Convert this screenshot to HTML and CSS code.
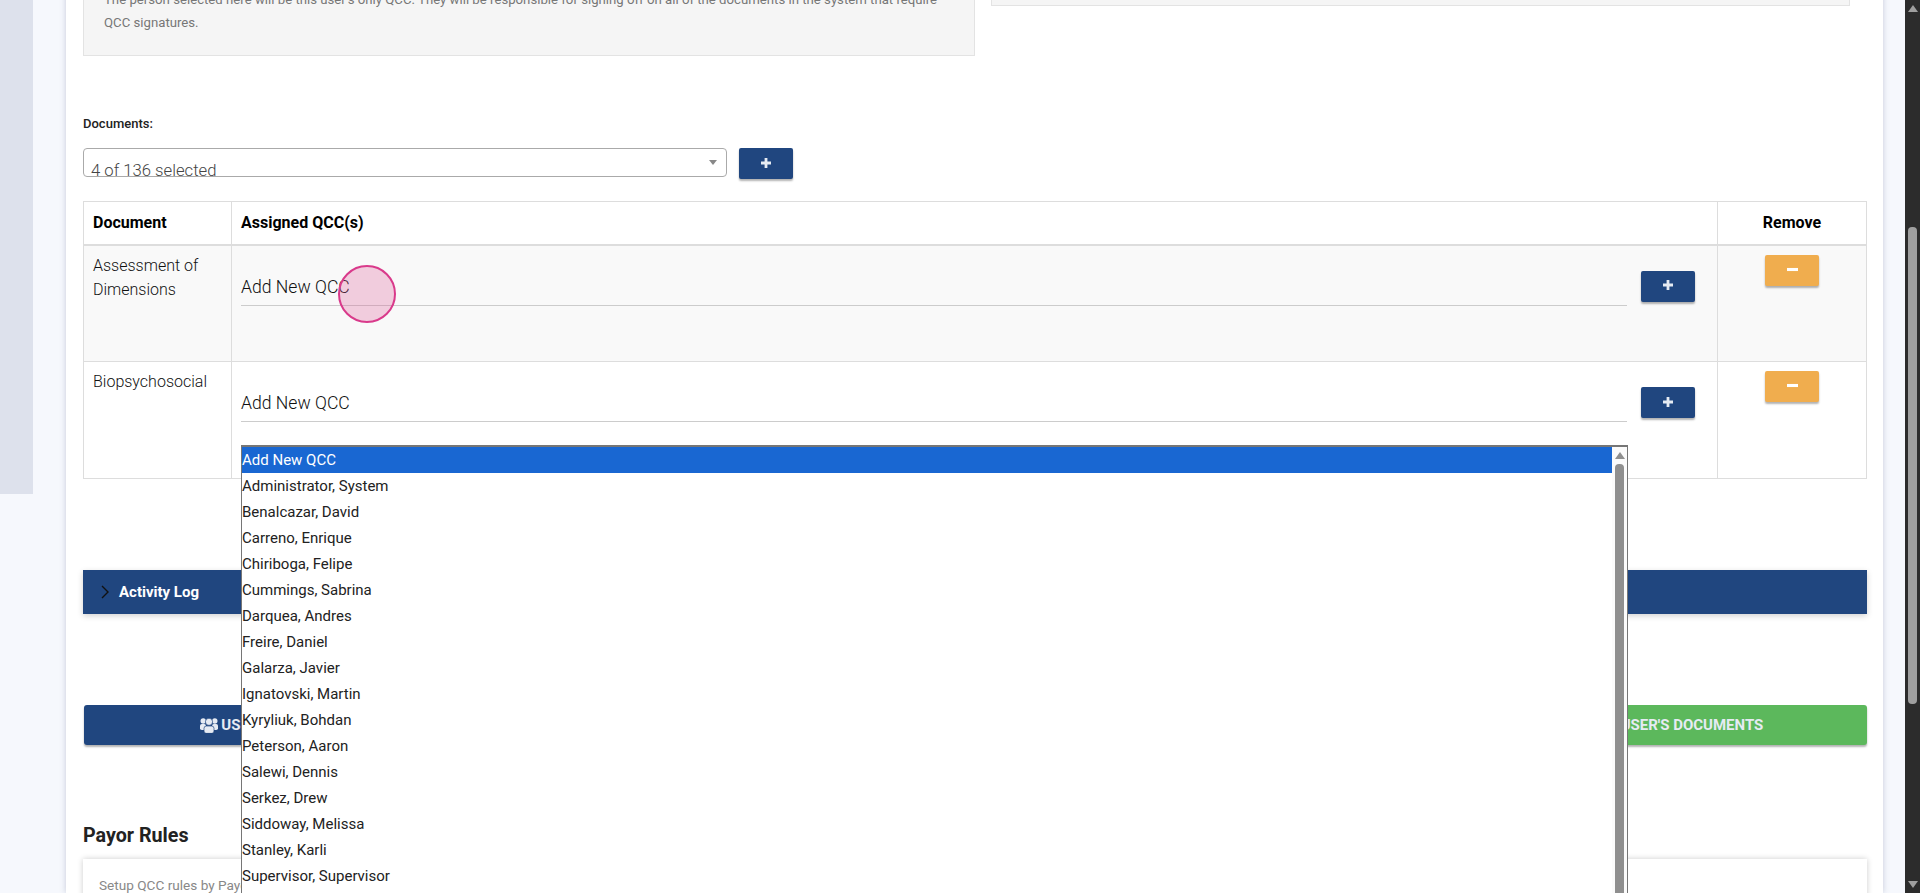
FILE: index.html
```html
<!DOCTYPE html>
<html lang="en">
<head>
  <meta charset="UTF-8">
  <meta name="viewport" content="width=device-width, initial-scale=1.0">
  <title>User QCC Settings</title>
  <link rel="stylesheet" href="styles.css">
</head>
<body>
  <div class="shell">
    <div class="sidebar"></div>

    <main class="card">
      <div class="info-row">
        <div class="info-box">The person selected here will be this user's only QCC. They will be responsible for signing off on all of the documents in the system that require QCC signatures.</div>
        <div class="info-box-short"></div>
      </div>

      <div class="field-label">Documents:</div>
      <div class="documents-row">
        <div class="multi-select">
          <span class="multi-select-text">4 of 136 selected</span>
          <span class="multi-select-arrow"></span>
        </div>
        <button class="btn btn-blue btn-icon" type="button">
          <svg class="icon-sign" viewBox="0 0 10 10"><path d="M3.6 0h2.8v3.6H10v2.8H6.4V10H3.6V6.4H0V3.6h3.6z"/></svg>
        </button>
      </div>

      <table class="qcc-table">
        <thead>
          <tr>
            <th class="col-doc">Document</th>
            <th>Assigned QCC(s)</th>
            <th class="col-remove">Remove</th>
          </tr>
        </thead>
        <tbody>
          <tr class="row-odd">
            <td class="doc-name">Assessment of Dimensions</td>
            <td>
              <div class="qcc-row">
                <div class="qcc-field">Add New QCC</div>
                <button class="btn btn-blue btn-icon" type="button">
                  <svg class="icon-sign" viewBox="0 0 10 10"><path d="M3.6 0h2.8v3.6H10v2.8H6.4V10H3.6V6.4H0V3.6h3.6z"/></svg>
                </button>
              </div>
            </td>
            <td class="col-remove">
              <button class="btn btn-orange btn-icon" type="button">
                <svg class="icon-sign" viewBox="0 0 10 10"><path d="M0 3.600h10v2.800H0z"/></svg>
              </button>
            </td>
          </tr>
          <tr>
            <td class="doc-name">Biopsychosocial</td>
            <td>
              <div class="qcc-row">
                <div class="qcc-field qcc-field-open">
                  Add New QCC
                  <div class="option-list">
                    <ul class="options">
                      <li class="selected">Add New QCC</li>
                      <li>Administrator, System</li>
                      <li>Benalcazar, David</li>
                      <li>Carreno, Enrique</li>
                      <li>Chiriboga, Felipe</li>
                      <li>Cummings, Sabrina</li>
                      <li>Darquea, Andres</li>
                      <li>Freire, Daniel</li>
                      <li>Galarza, Javier</li>
                      <li>Ignatovski, Martin</li>
                      <li>Kyryliuk, Bohdan</li>
                      <li>Peterson, Aaron</li>
                      <li>Salewi, Dennis</li>
                      <li>Serkez, Drew</li>
                      <li>Siddoway, Melissa</li>
                      <li>Stanley, Karli</li>
                      <li>Supervisor, Supervisor</li>
                    </ul>
                    <div class="list-scroll">
                      <span class="arrow-up"></span>
                      <span class="list-thumb"></span>
                    </div>
                  </div>
                </div>
                <button class="btn btn-blue btn-icon" type="button">
                  <svg class="icon-sign" viewBox="0 0 10 10"><path d="M3.6 0h2.8v3.6H10v2.8H6.4V10H3.6V6.4H0V3.6h3.6z"/></svg>
                </button>
              </div>
            </td>
            <td class="col-remove">
              <button class="btn btn-orange btn-icon" type="button">
                <svg class="icon-sign" viewBox="0 0 10 10"><path d="M0 3.600h10v2.800H0z"/></svg>
              </button>
            </td>
          </tr>
        </tbody>
      </table>

      <div class="activity-bar">
        <svg class="chevron" viewBox="0 0 8 14"><path d="M1 1l6 6-6 6" fill="none" stroke="#111" stroke-width="1.4"/></svg>
        <span>Activity Log</span>
      </div>

      <div class="action-row">
        <button class="btn btn-blue action-btn" type="button">
          <svg class="icon-users" viewBox="0 0 18 15">
            <circle cx="3.200" cy="3" r="2.700"/>
            <circle cx="14.800" cy="3" r="2.700"/>
            <rect x="0" y="6" width="6" height="6" rx="1.800"/>
            <rect x="12" y="6" width="6" height="6" rx="1.800"/>
            <circle class="users-front" cx="9" cy="3.800" r="3.600"/>
            <rect class="users-front" x="4" y="8" width="10" height="7.400" rx="2.400"/>
          </svg>
          USERS
        </button>
        <div></div>
        <button class="btn btn-green action-btn" type="button">USER'S DOCUMENTS</button>
      </div>

      <h2 class="section-title">Payor Rules</h2>
      <div class="payor-card">Setup QCC rules by Payor</div>
    </main>

    <div class="page-scroll">
      <span class="arrow-up"></span>
      <span class="page-thumb"></span>
      <span class="arrow-down"></span>
    </div>

    <!-- recorded click marker -->
    <div class="click-marker"></div>
  </div>
</body>
</html>
```

FILE: styles.css
```css
* {
  box-sizing: border-box;
}

html,
body {
  margin: 0;
  height: 893px;
  overflow: hidden;
}

body {
  font-family: Roboto, "Liberation Sans", sans-serif;
  background-color: #f6f8fd;
  color: #222;
}

.shell {
  position: relative;
  display: flex;
  align-items: flex-start;
  height: 893px;
  overflow: hidden;
}

.sidebar {
  width: 33px;
  height: 494px;
  margin-right: 33px;
  flex-shrink: 0;
  background-color: #dde1ec;
}

.card {
  width: 1817px;
  height: 921px;
  margin-top: -28px;
  padding: 0 16px 0 17px;
  flex-shrink: 0;
  background-color: #fff;
  box-shadow: 0 0 6px rgba(60, 70, 110, 0.25);
}

.info-row {
  display: grid;
  grid-template-columns: 892px 859px;
  gap: 16px;
  align-items: start;
}

.info-box {
  height: 84px;
  padding: 16px 20px 0;
  border: 1px solid #e3e3e3;
  border-top: none;
  background-color: #f5f5f5;
  color: #777;
  font-size: 13.2px;
  line-height: 23px;
}

.info-box-short {
  height: 34px;
  border: 1px solid #e3e3e3;
  border-top: none;
  background-color: #f5f5f5;
}

.field-label {
  margin-top: 60px;
  font-size: 13px;
  font-weight: 500;
  line-height: 16px;
  color: #222;
}

.documents-row {
  display: flex;
  align-items: flex-start;
  gap: 12px;
  margin-top: 16px;
}

.multi-select {
  position: relative;
  width: 644px;
  height: 29px;
  border: 1px solid #aaa;
  border-radius: 4px;
  overflow: hidden;
}

.multi-select-text {
  position: absolute;
  left: 7px;
  top: 12px;
  font-size: 16.7px;
  font-weight: 300;
  line-height: 20px;
  color: #444;
}

.multi-select-arrow {
  position: absolute;
  right: 9px;
  top: 11px;
  border-left: 4px solid transparent;
  border-right: 4px solid transparent;
  border-top: 5px solid #888;
}

.btn {
  display: inline-flex;
  align-items: center;
  justify-content: center;
  border: none;
  border-radius: 2px;
  box-shadow: 0 2px 2px rgba(0, 0, 0, 0.3);
  color: #e6ebf3;
  font-family: inherit;
}

.btn-blue {
  background-color: #20467f;
}

.btn-orange {
  background-color: #f0ad4e;
}

.btn-green {
  background-color: #5cb85c;
}

.btn-icon {
  width: 54px;
  height: 31px;
  padding: 0 0 2px;
  flex-shrink: 0;
}

.icon-sign {
  width: 10px;
  height: 10px;
  fill: currentColor;
}

.btn-orange .icon-sign {
  fill: #fff;
  width: 11px;
  height: 11px;
}

.qcc-table {
  width: 1784px;
  margin-top: 22px;
  border-collapse: collapse;
  table-layout: fixed;
  font-size: 16px;
  font-weight: 300;
  line-height: 24px;
  color: #111;
}

.qcc-table th,
.qcc-table td {
  padding: 10px 10px 10px 9px;
  border: 1px solid #ddd;
  vertical-align: top;
  text-align: left;
}

.qcc-table th {
  height: 43px;
  padding-top: 9px;
  padding-bottom: 8px;
  border-bottom-width: 2px;
  font-weight: 700;
  color: #000;
}

.qcc-table td {
  height: 117px;
}

.qcc-table td.doc-name {
  padding-top: 8px;
}

.qcc-table th.col-doc {
  width: 148px;
}

.qcc-table th.col-remove {
  width: 149px;
}

.qcc-table .col-remove {
  padding-left: 10px;
  text-align: center;
}

.qcc-table td.col-remove {
  padding-top: 9px;
}

.row-odd {
  background-color: #f9f9f9;
}

.qcc-row {
  display: flex;
  align-items: flex-start;
  gap: 14px;
  padding: 15px 12px 0 0;
}

.qcc-field {
  position: relative;
  flex: 1;
  height: 35px;
  border-bottom: 1px solid #ccc;
  font-size: 17.6px;
  line-height: 32px;
  color: #111;
}

.option-list {
  position: absolute;
  top: 58px;
  left: 0;
  z-index: 5;
  display: flex;
  width: 1387px;
  height: 480px;
  border: 1px solid #767676;
  border-top-width: 2px;
  border-bottom: none;
  background-color: #fff;
}

.options {
  flex: 1;
  margin: 0;
  padding: 0;
  list-style: none;
  font-size: 15px;
  font-weight: 400;
  line-height: 26px;
  color: #222;
}

.options li {
  height: 26px;
}

.options .selected {
  background-color: #1967d2;
  color: #fff;
}

.list-scroll {
  display: flex;
  flex-direction: column;
  align-items: center;
  width: 15px;
  padding-top: 5px;
  background-color: #fbfbfb;
}

.arrow-up {
  width: 0;
  border-left: 5px solid transparent;
  border-right: 5px solid transparent;
  border-bottom: 7px solid #8f8f8f;
}

.arrow-down {
  width: 0;
  border-left: 5px solid transparent;
  border-right: 5px solid transparent;
  border-top: 7px solid #9f9f9f;
}

.list-thumb {
  flex: 1;
  width: 9px;
  margin-top: 5px;
  border-radius: 4px 4px 0 0;
  background-color: #8f8f8f;
}

.activity-bar {
  display: flex;
  align-items: center;
  height: 44px;
  margin-top: 91px;
  padding-left: 18px;
  background-color: #20467f;
  box-shadow: 0 2px 6px rgba(0, 0, 0, 0.18);
  color: #fff;
  font-size: 15px;
  font-weight: 700;
}

.chevron {
  width: 8px;
  height: 14px;
  margin-right: 10px;
}

.action-row {
  display: grid;
  grid-template-columns: 300px 1fr 350px;
  margin: 91px 0 0 1px;
  width: 1783px;
}

.action-btn {
  height: 40px;
  padding: 0;
  border-radius: 3px;
  font-size: 15px;
  font-weight: 700;
}

.icon-users {
  width: 18px;
  height: 15px;
  margin-right: 3px;
  fill: currentColor;
}

.users-front {
  stroke: #20467f;
  stroke-width: 0.7;
}

.section-title {
  margin: 79px 0 11px;
  font-size: 19.7px;
  font-weight: 700;
  line-height: 24px;
  color: #222;
}

.payor-card {
  width: 1784px;
  height: 120px;
  padding: 17px 16px;
  background-color: #fff;
  box-shadow: 0 0 6px rgba(0, 0, 0, 0.2);
  color: #888;
  font-size: 13.6px;
  line-height: 18px;
}

.page-scroll {
  display: flex;
  flex-direction: column;
  align-items: center;
  width: 15px;
  height: 893px;
  margin-left: auto;
  padding: 5px 0;
  flex-shrink: 0;
  background-color: #2c2c2c;
}

.page-thumb {
  width: 9px;
  height: 477px;
  margin-top: 215px;
  border-radius: 4px;
  background-color: #9f9f9f;
}

.page-scroll .arrow-up {
  border-bottom-color: #9f9f9f;
}

.page-scroll .arrow-down {
  margin-top: auto;
}

.click-marker {
  position: absolute;
  left: 338px;
  top: 265px;
  z-index: 10;
  width: 58px;
  height: 58px;
  border: 2px solid #d93a8b;
  border-radius: 50%;
  background-color: rgba(222, 90, 150, 0.28);
}
```
